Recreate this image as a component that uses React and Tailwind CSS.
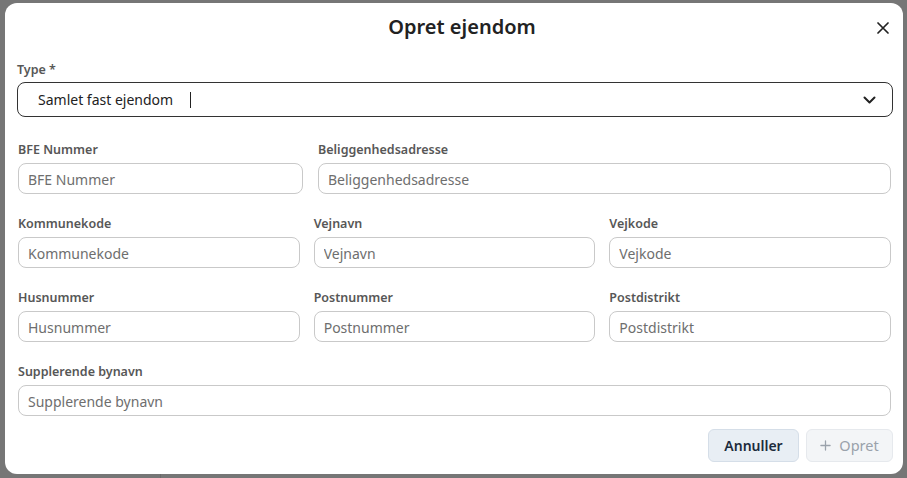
import React from "react";

const font = { fontFamily: '"Noto Sans", "Open Sans", Arial, sans-serif' };

function Field({ label }) {
  return (
    <div className="flex flex-col min-w-0">
      <div className="h-[18px] mb-[5px] text-[12.5px] leading-[20px] font-semibold text-[#575757]">{label}</div>
      <input
        placeholder={label}
        className="h-[31px] w-full rounded-[8px] border border-[#c9c9c9] bg-white pl-[9px] pt-[2px] text-[14px] text-[#333] placeholder:text-[#6e6e6e] outline-none"
        style={font}
      />
    </div>
  );
}

export default function App() {
  return (
    <div className="w-[907px] h-[478px] overflow-hidden bg-[#767676] flex flex-col" style={font}>
      <div className="ml-[5px] mr-[4px] mt-[3px] h-[471px] shrink-0 rounded-[12px] bg-white pl-[12px] pr-[10px] flex flex-col">
        <div className="h-[48px] flex items-center justify-center relative pl-[14px]">
          <h2 className="text-[20px] font-semibold text-[#222]">Opret ejendom</h2>
          <button className="absolute right-[3px] top-[18px] w-[14px] h-[14px] flex items-center justify-center">
            <svg width="12" height="12" viewBox="0 0 12 12" fill="none" stroke="#222" strokeWidth="1.7" strokeLinecap="round">
              <path d="M1 1L11 11M11 1L1 11" />
            </svg>
          </button>
        </div>
        <div className="mt-[9px] h-[18px] mb-[4px] text-[12.5px] leading-[20px] font-semibold text-[#575757]">Type *</div>
        <div className="h-[35px] rounded-[8px] border border-[#333] flex items-center pl-[20px] pr-[16px]">
          <span className="text-[14px] text-[#222]">Samlet fast ejendom</span>
          <span className="ml-[17px] w-px h-[16px] bg-[#222]" />
          <div className="flex-1" />
          <svg width="13" height="8" viewBox="0 0 13 8" fill="none" stroke="#222" strokeWidth="2" strokeLinecap="round" strokeLinejoin="round">
            <path d="M1.5 1.5L6.5 6.5L11.5 1.5" />
          </svg>
        </div>
        <div className="mt-[23px] pl-[1px] pr-[2px] flex flex-col gap-[20px]">
          <div className="grid grid-cols-[285px_1fr] gap-[15px]">
            <Field label="BFE Nummer" />
            <Field label="Beliggenhedsadresse" />
          </div>
          <div className="grid grid-cols-3 gap-[14px]">
            <Field label="Kommunekode" />
            <Field label="Vejnavn" />
            <Field label="Vejkode" />
          </div>
          <div className="grid grid-cols-3 gap-[14px]">
            <Field label="Husnummer" />
            <Field label="Postnummer" />
            <Field label="Postdistrikt" />
          </div>
          <div className="grid grid-cols-1">
            <Field label="Supplerende bynavn" />
          </div>
        </div>
        <div className="mt-[13px] flex justify-end gap-[7px]">
          <button className="h-[33px] w-[91px] rounded-[6px] border border-[#d5dee8] bg-[#e8eef4] text-[14px] font-semibold text-[#1c2b3c]">
            Annuller
          </button>
          <button className="h-[33px] w-[87px] rounded-[6px] border border-[#e6e9ed] bg-[#f3f5f7] text-[14.5px] text-[#9aa2ab] flex items-center justify-center gap-[8px]">
            <svg width="11" height="11" viewBox="0 0 12 12" fill="none" stroke="#9aa2ab" strokeWidth="1.4" strokeLinecap="round">
              <path d="M6 1V11M1 6H11" />
            </svg>
            Opret
          </button>
        </div>
      </div>
      <div className="relative flex-1 overflow-hidden">
        <div className="absolute left-[160px] top-0 h-full w-px bg-[#6a6a6a]" />
        <div className="absolute left-[213px] top-[2px] text-[15px] font-semibold text-[#1a1a1a] leading-[18px]">Tilknyt tilfældig adresse</div>
      </div>
    </div>
  );
}
